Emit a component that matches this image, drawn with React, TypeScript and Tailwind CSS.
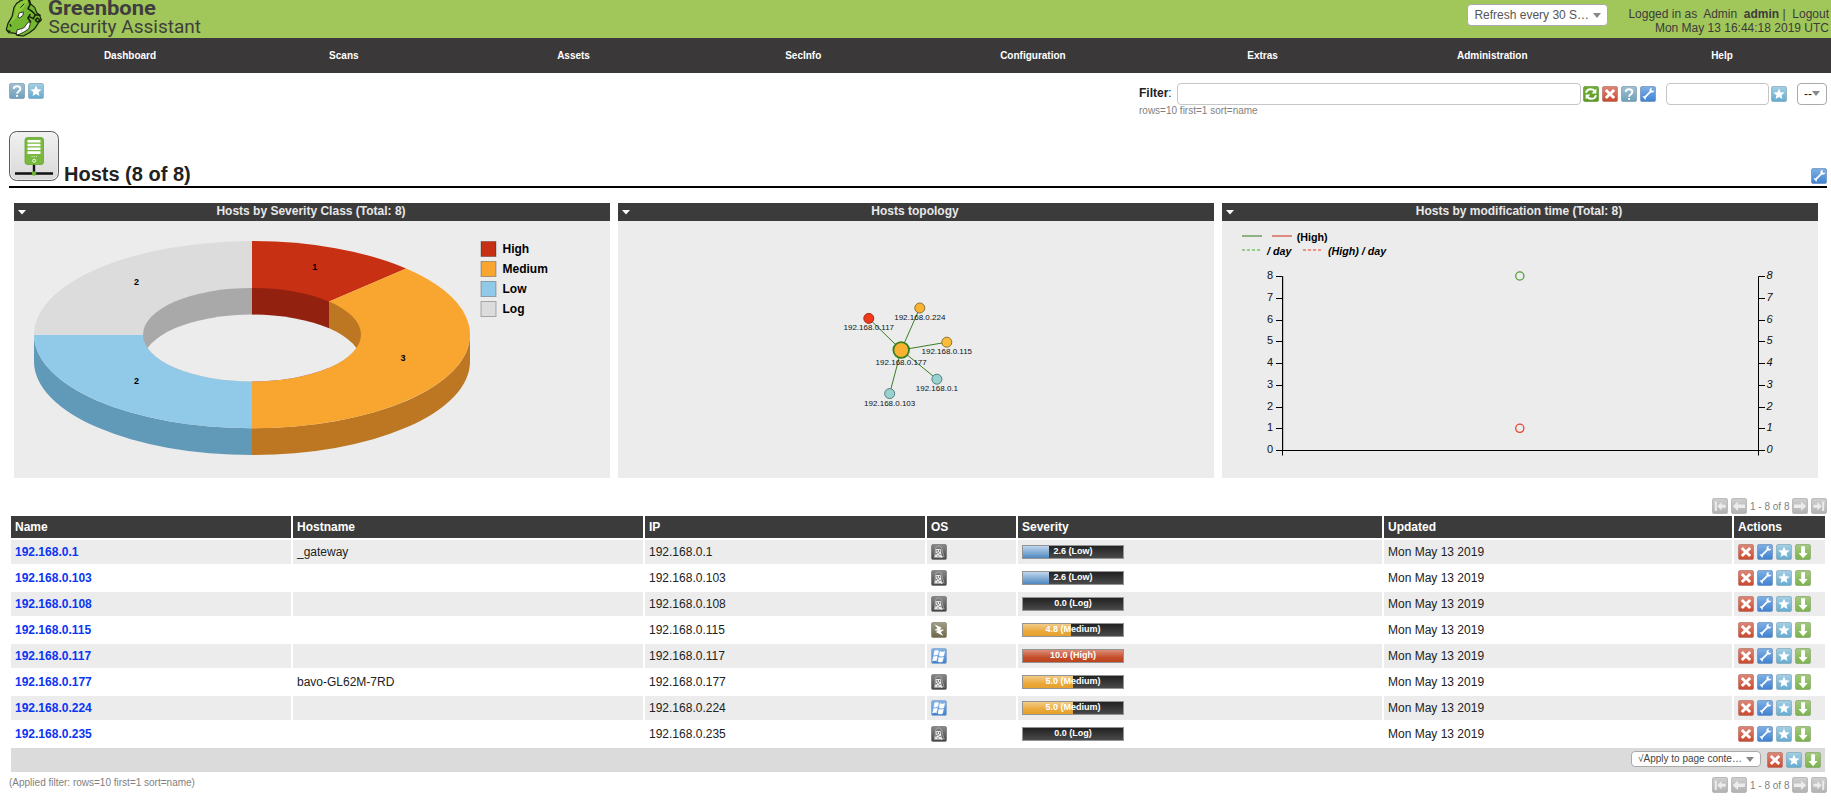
import React from 'react';

type Tone = { from: string; to: string; edge: string };

const TONES: Record<string, Tone> = {
  help: { from: '#a3c0d2', to: '#6f9fba', edge: '#7d9db0' },
  star: { from: '#a5cfe5', to: '#64abd0', edge: '#86a9bb' },
  wrench: { from: '#7fb0e4', to: '#3f82d2', edge: '#6f93bd' },
  del: { from: '#dd8877', to: '#c9492f', edge: '#b5776c' },
  export: { from: '#a3cb7e', to: '#7bb24c', edge: '#8ba872' },
  refresh: { from: '#6fae35', to: '#5c9a23', edge: '#6a9a45' },
  page: { from: '#cfcfcf', to: '#b2b2b2', edge: '#adadad' },
  linux: { from: '#8a8a8a', to: '#444444', edge: '#777777' },
  unknown: { from: '#a19c86', to: '#6d674a', edge: '#8d8870' },
  windows: { from: '#85b4e6', to: '#3d80d0', edge: '#8aa8cc' },
};

const GLYPHS: Record<string, React.ReactNode> = {
  help: (
    <g fill="none" stroke="#fff" strokeWidth="1.900">
      <path d="M4.700 5.900C4.800 3.900 6.200 3.200 8 3.200s3.400 1 3.400 2.600c0 1.400-.9 1.900-1.900 2.700C8.500 9.200 8.100 9.500 8.100 10.800" />
      <path d="M8.100 12v1.900" />
    </g>
  ),
  star: <path fill="#fff" d="M8 2.600l1.600 3.700 4 .3-3.100 2.600 1 3.900L8 11l-3.500 2.100 1-3.900-3.100-2.600 4-.3z" />,
  wrench: (
    <g>
      <path d="M4 12.100L11.500 4.700" stroke="#fff" strokeWidth="1.700" fill="none" />
      <path d="M11.900 1.700c-1.900.3-2.700 1.600-2.300 3.300l1.500 1.500c1.600.4 2.900-.3 3.300-2l-1.700.5-1.400-1.300z" fill="#fff" />
      <path d="M2.200 10.800c1.200-.9 2.200-.7 3.100.1.700.8.700 2-.2 3.300l-.5-1.800-.9-.9z" fill="#fff" />
    </g>
  ),
  del: <path d="M3.800 4l8.400 8M12.200 4l-8.400 8" stroke="#fff" strokeWidth="2.900" fill="none" />,
  export: <path d="M6.200 2.200h3.800v6.800h2.600L8.100 14.200 3.600 9h2.600z" fill="#fff" />,
  refresh: (
    <g fill="none" stroke="#fff" strokeWidth="2.100">
      <path d="M3 6.800C3.800 4 5.700 3.200 7.600 3.200c1.800 0 3 .6 4 1.800" />
      <path d="M13 9.200c-.8 2.800-2.700 3.600-4.600 3.600-1.800 0-3-.6-4-1.800" />
      <path d="M13.400 2.600v4.800H8.600z" fill="#fff" stroke="none" />
      <path d="M2.600 13.400V8.600h4.800z" fill="#fff" stroke="none" />
    </g>
  ),
  first: (
    <g fill="#ececec">
      <path d="M2.800 3.500h2v9.500h-2z" />
      <path d="M5.300 8.200L9.600 4v2.800h4v2.900h-4v2.800z" />
    </g>
  ),
  prev: <path fill="#ececec" d="M1.800 8.200L7 3.600v2.900h7v3.500H7v2.900z" />,
  next: <path fill="#ececec" d="M14.200 8.200L9 3.600v2.900H2v3.500h7v2.900z" />,
  last: (
    <g fill="#ececec">
      <path d="M11.200 3.500h2v9.500h-2z" />
      <path d="M10.700 8.200L6.400 4v2.800h-4v2.900h4v2.800z" />
    </g>
  ),
  linux: (
    <g>
      <path d="M3.200 13.500C3.600 10 4.200 8.500 4.300 6 4.400 3.300 5.500 1.900 7.500 1.900S11 3.200 11.200 6c.1 2.500 1.300 4.500 2 7.500" fill="none" stroke="#b0b0b0" strokeWidth=".8" />
      <path d="M4.600 5.500C5.500 4.800 9 4.800 10 5.500l.2 3.600 1 4.400H3.400l1.400-4z" fill="#e9e9e9" />
      <path d="M5.600 6.200h1.200v1.300H5.600zM8 6.200h1.200v1.300H8zM4.900 9.200h1v1h-1zM6.300 8.500h1.800v.8H6.300zM8.500 10h1v1h-1zM6.500 11.500h1v1h-1z" fill="#3d3d3d" />
      <path d="M10.300 13.400l2-.8" stroke="#fff" strokeWidth=".9" />
    </g>
  ),
  unknown: <path fill="#fff" d="M3.400 2.300l7.400 3.500-2.300 1.700 4.800.2-3.500 2.300 2.500 3.900-7.500-3.900 2.400-1.400-4.100-.3 3.400-2z" />,
  windows: (
    <g fill="#fff" stroke="#fff" strokeWidth=".6" strokeLinejoin="round">
      <path d="M3.700 3c1.200-.8 2.500-.7 3.800-.1l-.9 4.200c-1.200-.5-2.500-.6-3.800.2z" />
      <path d="M9 3.500c1.500.7 3 .7 4.600 0l-.9 4.200c-1.400.7-3 .7-4.500 0z" />
      <path d="M2.500 8.700c1.200-.8 2.500-.7 3.800-.1l-.9 4.200c-1.200-.5-2.500-.6-3.800.2z" />
      <path d="M7.900 9.200c1.400.7 3 .7 4.500 0l-.9 4.200c-1.400.7-3 .7-4.500 0z" />
    </g>
  ),
};

function Icon({ name, tone }: { name: string; tone?: string }) {
  const t = TONES[tone ?? name];
  const id = `tone-${tone ?? name}`;
  return (
    <svg className="block size-4 shrink-0" viewBox="0 0 16 16">
      <defs>
        <linearGradient id={id} x1="0" y1="0" x2="0" y2="1">
          <stop offset="0" stopColor={t.from} />
          <stop offset="1" stopColor={t.to} />
        </linearGradient>
      </defs>
      <rect x=".5" y=".5" width="15" height="15" rx="1.500" fill={`url(#${id})`} stroke={t.edge} strokeOpacity=".75" />
      {GLYPHS[name]}
    </svg>
  );
}

function Arrow() {
  return (
    <svg className="block h-[5px] w-2 shrink-0" viewBox="0 0 8 5">
      <path d="M0 0h8L4 5z" fill="#888" />
    </svg>
  );
}

function Logo() {
  return (
    <svg className="block h-[38px] w-[210px] shrink-0" viewBox="0 0 210 38">
      <g transform="scale(.3333)" strokeLinejoin="round" strokeLinecap="round">
        <path d="M60-4L66 2 78-8 88-2 92 12 104 22 110 38 118 44 124 60 116 68 104 86 88 98 70 108 52 106 46 100 26 98 19 88 24 70 36 50 42 22 50 10 60 4z" fill="#74b730" stroke="#17200c" strokeWidth="3.500" />
        <path d="M62 6L48 16 44 42 30 70 40 62 56 46 72 22 84 6 78-4z" fill="#8fc93e" />
        <path d="M86 0L90 14 84 26 96 34 106 44 100 56 88 50M90 44L84 54 92 66M106 44l14 2M112 54l8 6-8 6-6-6z" fill="none" stroke="#17200c" strokeWidth="4.500" />
        <path d="M62 22l10-10" stroke="#17200c" strokeWidth="3" />
        <path d="M54 50l4-12 12-2-1 10-9 7z" fill="#fff" stroke="#17200c" strokeWidth="2.500" />
        <path d="M49 104l2-14 20-6 14-18 6 5-5 16-14 9-12 6z" fill="#fff" stroke="#17200c" strokeWidth="2.500" />
        <path d="M64 86l2 10M76 78l3 10" stroke="#9a9a9a" strokeWidth="1.500" />
        <path d="M30 74l3 4M22 92l8 2" stroke="#17200c" strokeWidth="4" />
      </g>
      <text x="48" y="14.700" fontFamily="Roboto, 'Open Sans', sans-serif" fontSize="21" fontWeight="700" fill="#3f3d3e" textLength="108" lengthAdjust="spacingAndGlyphs">Greenbone</text>
      <text x="48.500" y="32.500" fontFamily="Roboto, 'Open Sans', sans-serif" fontSize="18.500" fontWeight="400" fill="#3f3d3e" textLength="152.500" lengthAdjust="spacingAndGlyphs">Security Assistant</text>
    </svg>
  );
}

function HostIcon() {
  return (
    <svg className="block size-[50px] shrink-0" viewBox="0 0 50 50">
      <defs>
        <linearGradient id="tile" x1="0" y1="0" x2="0" y2="1">
          <stop offset="0" stopColor="#f0f0f0" />
          <stop offset="1" stopColor="#d9d9d9" />
        </linearGradient>
      </defs>
      <rect x=".6" y=".6" width="48.800" height="48.800" rx="7" fill="#fff" stroke="#4a4a4a" />
      <rect x="1.800" y="1.800" width="46.400" height="46.400" rx="6" fill="url(#tile)" />
      <path d="M6 42.500h38M25 33v8" stroke="#111" strokeWidth="2.400" />
      <rect x="16" y="6.500" width="18.500" height="27" rx="2.500" fill="#7ab93f" stroke="#66a52f" strokeWidth=".8" />
      <path d="M18.500 10.200h13M18.500 14h13M18.500 17.800h13M18.500 21.600h13" stroke="#fff" strokeWidth="2.600" />
      <path d="M22.500 25.500h5.500" stroke="#d4ebbb" strokeWidth="1.200" strokeDasharray="1.200 1" />
      <circle cx="25.200" cy="29.700" r="1.500" fill="none" stroke="#fff" strokeWidth=".9" />
      <circle cx="25" cy="42.500" r="2.200" fill="#66b32e" />
    </svg>
  );
}

const NAV = ['Scans', 'Assets', 'SecInfo', 'Configuration', 'Extras', 'Administration', 'Help'];

function Panel({ title, children }: { title: string; children: React.ReactNode }) {
  return (
    <section className="h-[275px] w-[596px] bg-[#ececec]">
      <header className="flex h-[18px] items-center bg-[#3c3b3c] pl-1">
        <svg className="block h-[5px] w-2 shrink-0" viewBox="0 0 8 5">
          <path d="M0 0h8L4 4.600z" fill="#fff" />
        </svg>
        <h2 className="flex-1 pr-[14px] pb-[2px] text-center text-[12px] leading-[14px] font-bold text-[#e8e8e8]">{title}</h2>
      </header>
      {children}
    </section>
  );
}

const LEGEND = [
  ['High', '#c83014'],
  ['Medium', '#f8a630'],
  ['Low', '#91cae8'],
  ['Log', '#dcdcdc'],
];

function Donut() {
  return (
    <svg className="block h-[257px] w-[596px]" viewBox="14 221 596 257" fontFamily="Liberation Sans, Arial, sans-serif">
      <defs>
        <clipPath id="hole">
          <ellipse cx="252" cy="334.700" rx="109" ry="46.800" />
        </clipPath>
      </defs>
      <path d="M34 334.700A218 93.600 0 0 0 252 428.300V455A218 93.600 0 0 1 34 361.400z" fill="#619ab8" />
      <path d="M470 334.700A218 93.600 0 0 1 252 428.300V455A218 93.600 0 0 0 470 361.400z" fill="#bd7723" />
      <path d="M252 334.700V241.100A218 93.600 0 0 1 406.150 268.500z" fill="#c83014" />
      <path d="M252 334.700L406.150 268.500A218 93.600 0 0 1 252 428.300z" fill="#f8a630" />
      <path d="M252 334.700V428.300A218 93.600 0 0 1 34 334.700z" fill="#91cae8" />
      <path d="M252 334.700H34A218 93.600 0 0 1 252 241.100z" fill="#dcdcdc" />
      <g clipPath="url(#hole)">
        <rect x="140" y="285" width="112" height="100" fill="#a9a9a9" />
        <rect x="252" y="285" width="77" height="100" fill="#932110" />
        <rect x="329" y="285" width="40" height="100" fill="#bd7723" />
        <ellipse cx="252" cy="361.400" rx="109" ry="46.800" fill="#ececec" />
      </g>
      <g fontSize="9" fontWeight="700" textAnchor="middle">
        <text x="314.700" y="270">1</text>
        <text x="403" y="361">3</text>
        <text x="136.500" y="384">2</text>
        <text x="136.500" y="285">2</text>
      </g>
      {LEGEND.map(([label, color], i) => (
        <g key={label}>
          <rect x="481" y={241.5 + i * 20} width="15" height="15" fill={color} stroke="#000" strokeOpacity=".28" />
          <text x="502.500" y={253 + i * 20} fontSize="12" fontWeight="700">{label}</text>
        </g>
      ))}
    </svg>
  );
}

const NODES = [
  { ip: '192.168.0.117', x: 868.8, y: 318.4, fill: '#f0391b', edge: '#a52a14' },
  { ip: '192.168.0.224', x: 919.8, y: 308, fill: '#f9b232', edge: '#8f7130' },
  { ip: '192.168.0.115', x: 946.8, y: 342.2, fill: '#fabc38', edge: '#8f7130' },
  { ip: '192.168.0.1', x: 936.9, y: 379.2, fill: '#99d0d0', edge: '#51827f' },
  { ip: '192.168.0.103', x: 889.7, y: 393.6, fill: '#99d0d0', edge: '#51827f' },
];

function Topology() {
  return (
    <svg className="block h-[257px] w-[596px]" viewBox="618 221 596 257" fontFamily="Liberation Sans, Arial, sans-serif">
      {NODES.map((n) => (
        <line key={n.ip} x1="901.200" y1="350" x2={n.x} y2={n.y} stroke="#3a7d22" />
      ))}
      {NODES.map((n) => (
        <circle key={n.ip} cx={n.x} cy={n.y} r="5" fill={n.fill} stroke={n.edge} />
      ))}
      <circle cx="901.200" cy="350" r="7.800" fill="#f9b232" stroke="#357f1c" strokeWidth="1.800" />
      <g fontSize="8" textAnchor="middle" fill="#111">
        {NODES.map((n) => (
          <text key={n.ip} x={n.x} y={Math.round(n.y + 12)}>{n.ip}</text>
        ))}
        <text x="901.200" y="365">192.168.0.177</text>
      </g>
    </svg>
  );
}

function Timeline() {
  const ticks = [0, 1, 2, 3, 4, 5, 6, 7, 8];
  return (
    <svg className="block h-[257px] w-[596px]" viewBox="1222 221 596 257" fontFamily="Liberation Sans, Arial, sans-serif">
      <path d="M1242 236h20" stroke="#8fb285" strokeWidth="2" />
      <path d="M1272 236h20" stroke="#dd8b7c" strokeWidth="2" />
      <path d="M1242 250h18" stroke="#94cd84" strokeWidth="2" strokeDasharray="3 2" />
      <path d="M1303 250h19" stroke="#f09083" strokeWidth="2" strokeDasharray="3 2" />
      <g fontSize="10.700" fontWeight="700">
        <text x="1296.700" y="241">(High)</text>
        <g fontStyle="italic">
          <text x="1267" y="255">/ day</text>
          <text x="1328" y="255">(High) / day</text>
        </g>
      </g>
      <path d="M1283.500 276v174" stroke="#a9cf9c" />
      <path d="M1276 276.500h6.500v179M1765 276.500h-6.500v179M1276 450.500h489" fill="none" stroke="#000" />
      {ticks.map((t) => {
        const y = Math.round(450 - t * 21.75);
        return (
          <g key={t} fontSize="11" fill="#111">
            <path d={`M1276 ${y + 0.5}h6M1759 ${y + 0.5}h6`} stroke="#000" />
            <text x="1273" y={y + 3} textAnchor="end">{t}</text>
            <text x="1766.500" y={y + 3} fontStyle="italic">{t}</text>
          </g>
        );
      })}
      <circle cx="1519.800" cy="276" r="4.100" fill="none" stroke="#4f9e35" strokeWidth="1.300" />
      <circle cx="1519.800" cy="428.300" r="4.100" fill="none" stroke="#e2452c" strokeWidth="1.300" />
    </svg>
  );
}

function Pager() {
  return (
    <div className="flex h-4 items-center justify-end gap-[3px] pr-1">
      <Icon name="first" tone="page" />
      <Icon name="prev" tone="page" />
      <span className="w-[39px] pt-px text-center text-[10px] leading-4 whitespace-nowrap text-[#7f7f7f]">1 - 8 of 8</span>
      <Icon name="next" tone="page" />
      <Icon name="last" tone="page" />
    </div>
  );
}

type Level = 'Low' | 'Log' | 'Medium' | 'High';

const FILL: Record<Level, string> = {
  Log: 'bg-transparent',
  Low: 'bg-linear-to-b from-[#bfd6ec] to-[#4f88c0]',
  Medium: 'bg-linear-to-b from-[#f2cb84] via-[#eba93a] via-60% to-[#e6a12a]',
  High: 'bg-linear-to-b from-[#dd8d78] via-[#c4502c] via-60% to-[#bd421b]',
};

const HOSTS: { ip: string; host: string; os: string; score: number; level: Level }[] = [
  { ip: '192.168.0.1', host: '_gateway', os: 'linux', score: 2.6, level: 'Low' },
  { ip: '192.168.0.103', host: '', os: 'linux', score: 2.6, level: 'Low' },
  { ip: '192.168.0.108', host: '', os: 'linux', score: 0, level: 'Log' },
  { ip: '192.168.0.115', host: '', os: 'unknown', score: 4.8, level: 'Medium' },
  { ip: '192.168.0.117', host: '', os: 'windows', score: 10, level: 'High' },
  { ip: '192.168.0.177', host: 'bavo-GL62M-7RD', os: 'linux', score: 5, level: 'Medium' },
  { ip: '192.168.0.224', host: '', os: 'windows', score: 5, level: 'Medium' },
  { ip: '192.168.0.235', host: '', os: 'linux', score: 0, level: 'Log' },
];

const ROW = 'grid grid-cols-[280px_350px_280px_89px_364px_348px_91px] gap-x-[2px]';

function SeverityBar({ score, level }: { score: number; level: Level }) {
  return (
    <div className="relative h-[14px] w-[102px] border border-[#949494] bg-linear-to-b from-[#222] to-[#4a4a4a]">
      <div className={`h-full ${FILL[level]}`} style={{ width: `${score * 10}%` }} />
      <span className="absolute inset-x-0 top-0 text-center text-[9px] leading-[10px] font-bold text-white">
        {score.toFixed(1)} ({level})
      </span>
    </div>
  );
}

export default function App() {
  return (
    <div className="h-[800px] w-[1831px] overflow-hidden bg-white font-['Liberation_Sans',Arial,sans-serif] text-[12px] leading-[14px] text-[#222]">
      <div className="flex h-[38px] justify-between bg-[#a1c75a]">
        <Logo />
        <div className="flex gap-[20px] pr-[2px] pt-1 text-[#3d3a3b]">
          <div className="flex h-[22px] w-[141px] items-center justify-between rounded-[4px] border border-[#aaa] bg-white pr-1.5 pl-1.5 text-[#555]">
            <span>Refresh every 30 S…</span>
            <Arrow />
          </div>
          <div className="pt-[3px] text-right">
            <div className="whitespace-pre">Logged in as  Admin  <b>admin</b> |  Logout</div>
            <div>Mon May 13 16:44:18 2019 UTC</div>
          </div>
        </div>
      </div>

      <nav className="flex h-[35px] items-center overflow-hidden bg-[#3b3839] pl-[31px] text-center text-[10px] font-bold text-white">
        <span className="w-[198px] shrink-0">Dashboard</span>
        {NAV.map((n) => (
          <span key={n} className="w-[229.700px] shrink-0">{n}</span>
        ))}
      </nav>

      <div className="flex h-[58px] items-start justify-between pt-2.5 pr-1 pl-[9px]">
        <div className="flex gap-[3px]">
          <Icon name="help" />
          <Icon name="star" />
        </div>
        <div className="w-[688px]">
          <div className="flex h-[22px] items-center">
            <span className="w-[38px] pb-[2px]"><b>Filter</b>:</span>
            <div className="h-[22px] w-[404px] rounded-[4px] border border-[#c6c6c6]" />
            <div className="ml-[2px] flex gap-[3px]">
              <Icon name="refresh" />
              <Icon name="del" />
              <Icon name="help" />
              <Icon name="wrench" />
            </div>
            <div className="ml-2.5 h-[22px] w-[103px] rounded-[4px] border border-[#c6c6c6]" />
            <div className="ml-[2px]"><Icon name="star" /></div>
            <div className="ml-2.5 flex h-[22px] w-[30px] items-center justify-center rounded-[4px] border border-[#aaa] pb-px">
              <span>--</span>
              <Arrow />
            </div>
          </div>
          <div className="text-[10px] leading-[11px] text-[#7f7f7f]">rows=10 first=1 sort=name</div>
        </div>
      </div>

      <div className="mr-1 ml-[9px] flex h-[57px] items-start border-b-2 border-black">
        <HostIcon />
        <h1 className="flex-1 pt-[32px] pl-[5px] text-[20px] leading-[22px] font-bold">Hosts (8 of 8)</h1>
        <div className="pt-[37px]"><Icon name="wrench" /></div>
      </div>

      <div className="flex gap-2 pt-[15px] pl-[14px]">
        <Panel title="Hosts by Severity Class (Total: 8)"><Donut /></Panel>
        <Panel title="Hosts topology"><Topology /></Panel>
        <Panel title="Hosts by modification time (Total: 8)"><Timeline /></Panel>
      </div>

      <div className="pt-5"><Pager /></div>

      <div className="mt-[2px] ml-[11px] flex w-[1814px] flex-col gap-[2px]">
        <div className={`${ROW} h-[22px] leading-[22px] font-bold text-white *:bg-[#3c3b3c] *:pl-1`}>
          <span>Name</span>
          <span>Hostname</span>
          <span>IP</span>
          <span>OS</span>
          <span>Severity</span>
          <span>Updated</span>
          <span>Actions</span>
        </div>
        {HOSTS.map((h, i) => (
          <div key={h.ip} className={`${ROW} h-6 leading-[24px] *:pl-1 ${i % 2 ? '' : '*:bg-[#ececec]'}`}>
            <span className="font-bold text-[#0a35f5]">{h.ip}</span>
            <span>{h.host}</span>
            <span>{h.ip}</span>
            <div className="flex items-center"><Icon name={h.os} /></div>
            <div className="flex items-center"><SeverityBar score={h.score} level={h.level} /></div>
            <span>Mon May 13 2019</span>
            <div className="flex items-center gap-[3px]">
              <Icon name="del" />
              <Icon name="wrench" />
              <Icon name="star" />
              <Icon name="export" />
            </div>
          </div>
        ))}
        <div className="flex h-6 items-center justify-end gap-[3px] bg-[#dbdbdb] pr-1">
          <div className="mr-[3px] mb-[2px] flex h-4 w-[130px] items-center justify-between rounded-[4px] border border-[#aaa] bg-white pr-1.5 pl-1.5 text-[10px] text-[#444]">
            <span>√Apply to page conte…</span>
            <Arrow />
          </div>
          <Icon name="del" />
          <Icon name="star" />
          <Icon name="export" />
        </div>
      </div>

      <div className="flex items-start justify-between pl-[9px]">
        <span className="pt-1 text-[10px] text-[#7f7f7f]">(Applied filter: rows=10 first=1 sort=name)</span>
        <div className="pt-[5px]"><Pager /></div>
      </div>
    </div>
  );
}
